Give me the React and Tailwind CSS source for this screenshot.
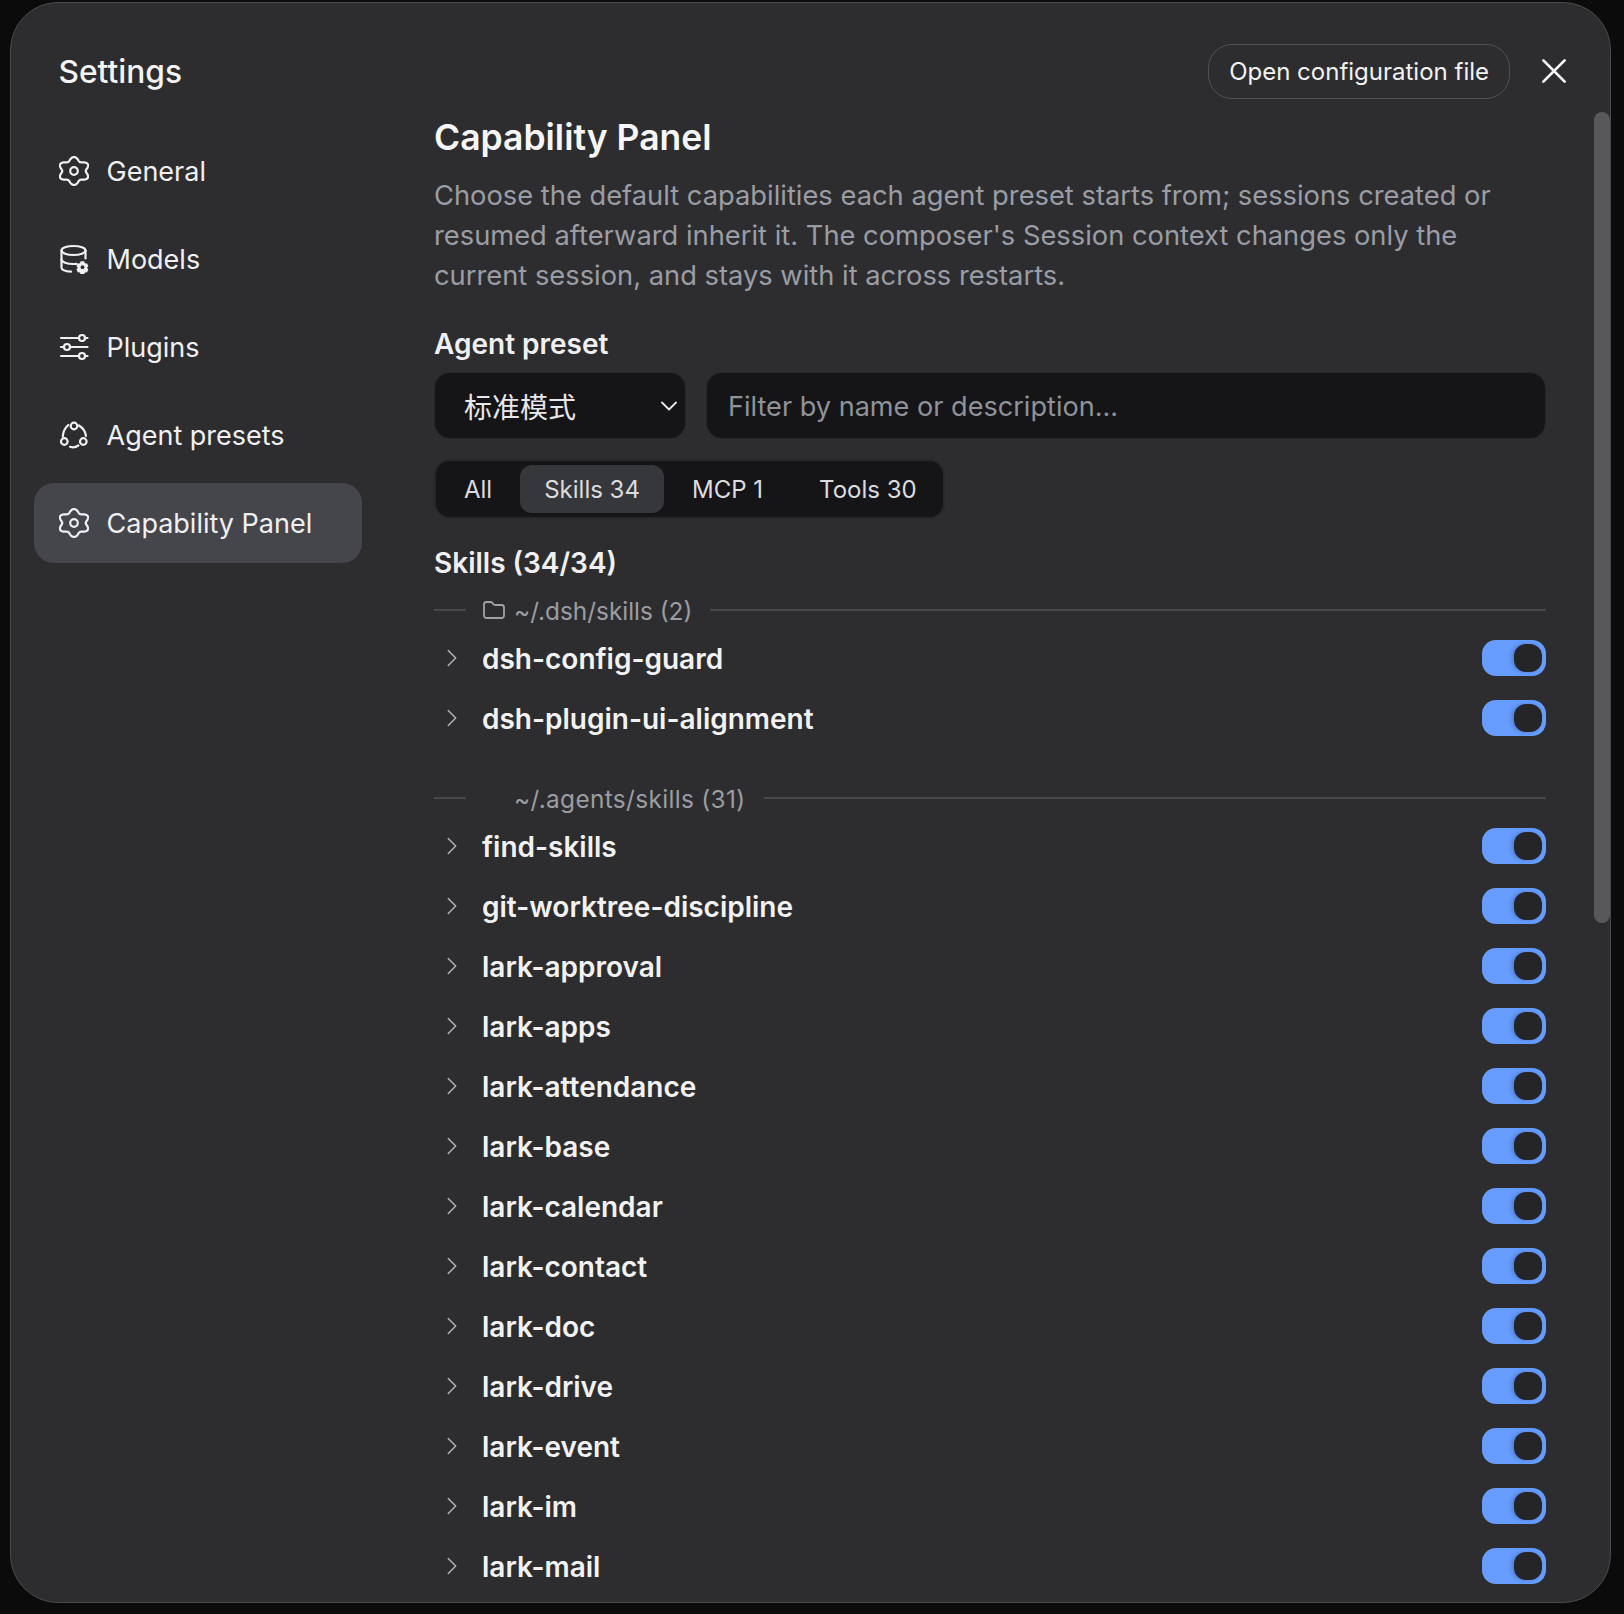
const flowerPath = (() => {
  const pts = [];
  for (let i = 0; i < 180; i++) {
    const t = (i / 180) * Math.PI * 2;
    const r = 12.2 + 1.8 * Math.cos(6 * t);
    pts.push(`${(15 + 1.13 * r * Math.sin(t)).toFixed(2)} ${(15 - r * Math.cos(t)).toFixed(2)}`);
  }
  return `M${pts.join("L")}Z`;
})();

const GearIcon = () => (
  <svg viewBox="0 0 30 30" className="w-[30px] h-[30px]" fill="none" stroke="currentColor" strokeWidth="2.200" strokeLinejoin="round">
    <path d={flowerPath} />
    <circle cx="15" cy="15" r="3.800" />
  </svg>
);

const ModelsIcon = () => (
  <svg viewBox="0 0 30 30" className="w-[30px] h-[30px]" fill="none" stroke="currentColor" strokeWidth="2.200" strokeLinecap="round" strokeLinejoin="round">
    <ellipse cx="14.500" cy="6.500" rx="12" ry="4.500" />
    <path d="M2.500 6.500v17c0 2.200 4 3.800 9.500 4.100" />
    <path d="M2.500 15.500c0 2.500 5.400 4.500 12 4.500 1 0 2-.1 3-.2" />
    <path d="M26.500 6.500v8" />
    <path d="M22 16.800h4l1 2.300 2.500.3 1.500 3-1.500 2.100 1.500 2.100-1.500 3-2.500.3-1 2.300h-4l-1-2.300-2.500-.3-1.500-3 1.500-2.100-1.500-2.100 1.500-3 2.500-.3z" fill="currentColor" stroke="none" transform="translate(3 3) scale(0.85)" />
    <circle cx="23.500" cy="23.200" r="1.900" fill="#2d2d2f" stroke="none" />
  </svg>
);

const SlidersIcon = () => (
  <svg viewBox="0 0 30 30" className="w-[30px] h-[30px]" fill="none" stroke="currentColor" strokeWidth="2.200" strokeLinecap="round">
    <path d="M2 6h18M26 6h2.500M2 15h3M11 15h17.500M2 24h18M26 24h2.500" />
    <circle cx="23" cy="6" r="3" />
    <circle cx="8" cy="15" r="3" />
    <circle cx="23" cy="24" r="3" />
  </svg>
);

const AgentIcon = () => (
  <svg viewBox="0 0 30 30" className="w-[30px] h-[30px]" fill="none" stroke="currentColor" strokeWidth="2.200" strokeLinecap="round">
    <circle cx="15" cy="6" r="3.300" />
    <circle cx="5.300" cy="21.500" r="3.300" />
    <circle cx="24.300" cy="21.500" r="3.300" />
    <path d="M3.800 16.500C4 12 6 8 9.300 5" />
    <path d="M20 5.500C24 8 26.500 11.800 27 16" />
    <path d="M11 26.800C14 27.800 17 27.200 19.300 25.500" />
  </svg>
);

const Chevron = () => (
  <svg viewBox="0 0 16 24" className="w-[12px] h-[18px] text-[#b3b3b6]" fill="none" stroke="currentColor" strokeWidth="2" strokeLinecap="round" strokeLinejoin="round">
    <path d="M3 2l10 10L3 22" />
  </svg>
);

const Toggle = () => (
  <div className="flex h-[36px] w-[64px] items-center justify-end rounded-[14px] bg-[#679dff] pr-[4px] shrink-0">
    <div className="h-[28px] w-[28px] rounded-[12px] bg-[#252527] shadow-[-2px_0_4px_rgba(30,60,120,0.35)]" />
  </div>
);

const Row = ({ name }) => (
  <div className="flex h-[60px] items-center justify-between">
    <div className="flex items-center">
      <div className="flex w-[48px] items-center pl-[12px]"><Chevron /></div>
      <span className="pt-[2px] text-[28px] font-semibold text-[#f2f2f3] leading-[40px]">{name}</span>
    </div>
    <Toggle />
  </div>
);

const GroupHeader = ({ label, folder }) => (
  <div className="flex h-[24px] items-center">
    <div className="h-[2px] w-[32px] bg-[#48484b]" />
    <div className="flex items-center pl-[16px] pr-[18px]">
      <div className="flex w-[32px] items-center">
        {folder && (
          <svg viewBox="0 0 24 24" className="w-[24px] h-[24px] text-[#a0a2a8]" fill="none" stroke="currentColor" strokeWidth="1.800" strokeLinejoin="round">
            <path d="M2 6.500C2 5 3 4 4.500 4h4.200c.7 0 1.300.3 1.700.9l1 1.300c.4.500 1 .8 1.700.8h6.400C21 7 22 8 22 9.500v8c0 1.500-1 2.500-2.500 2.500h-15C3 20 2 19 2 17.500z" />
          </svg>
        )}
      </div>
      <span className={`pt-[1px] text-[24.400px] leading-[32px] text-[#9b9da3] ${folder ? "" : "tracking-[0.35px]"}`}>{label}</span>
    </div>
    <div className="h-[2px] flex-1 bg-[#48484b]" />
  </div>
);

const NavItem = ({ icon, label, active }) => (
  <div className={`flex h-[80px] items-center gap-[18px] rounded-[20px] pl-[25px] ${active ? "bg-[#45464b]" : ""} text-[#f0f0f2] mb-[8px]`}>
    {icon}
    <span className="pt-[2px] text-[27px] leading-[40px]">{label}</span>
  </div>
);

const group1 = ["dsh-config-guard", "dsh-plugin-ui-alignment"];
const group2 = ["find-skills", "git-worktree-discipline", "lark-approval", "lark-apps", "lark-attendance", "lark-base", "lark-calendar", "lark-contact", "lark-doc", "lark-drive", "lark-event", "lark-im", "lark-mail"];

export default function App() {
  return (
    <div className="h-[1614px] w-[1624px] overflow-hidden bg-[#0b0b0b] pl-[9.500px] pt-[2px]" style={{ fontFamily: "Inter, 'Noto Sans CJK SC', sans-serif" }}>
      <div className="relative flex h-[1601px] w-[1601.500px] overflow-hidden rounded-[48px] border border-[#4a4a4c] bg-[#2d2d2f]">
        <aside className="w-[423.500px] shrink-0 pl-[23px] pr-[72.500px]">
          <div className="pl-[25px] pt-[47px] text-[31.700px] leading-[44px] font-medium text-[#f4f4f5]">Settings</div>
          <nav className="mt-[37px]">
            <NavItem icon={<GearIcon />} label="General" />
            <NavItem icon={<ModelsIcon />} label="Models" />
            <NavItem icon={<SlidersIcon />} label="Plugins" />
            <NavItem icon={<AgentIcon />} label="Agent presets" />
            <NavItem icon={<GearIcon />} label="Capability Panel" active />
          </nav>
        </aside>
        <main className="flex-1 pr-[64px] min-w-0">
          <div className="flex h-[98px] items-start justify-end pt-[41px] -mr-[23px]">
            <div className="flex h-[55px] items-center rounded-[24px] border border-[#515154] px-[20px] text-[24px] text-[#f2f2f3] whitespace-nowrap">Open configuration file</div>
            <svg viewBox="0 0 24 24" className="ml-[29px] mt-[12px] h-[30px] w-[30px] text-[#f4f4f5]" fill="none" stroke="currentColor" strokeWidth="2.200" strokeLinecap="round">
              <path d="M3.500 3.500l17 17M20.500 3.500l-17 17" />
            </svg>
          </div>
          <h1 className="mt-[11px] text-[35.500px] leading-[52px] font-semibold text-[#f6f6f7]">Capability Panel</h1>
          <p className="mt-[12px] text-[27.300px] leading-[40px] text-[#9a9da5]">Choose the default capabilities each agent preset starts from; sessions created or resumed afterward inherit it. The composer's Session context changes only the current session, and stays with it across restarts.</p>
          <h2 className="mt-[28px] text-[28px] leading-[40px] font-semibold text-[#f0f0f2]">Agent preset</h2>
          <div className="mt-[8px] flex gap-[20px]">
            <div className="flex h-[67px] w-[252px] items-center justify-between rounded-[16px] border border-[#27272a] bg-[#151517] pl-[29px] pr-[8px] text-[28px] text-[#e8e8ea]">
              <span className="pt-[4px]">标准模式</span>
              <svg viewBox="0 0 16 10" className="w-[16px] h-[10px] text-[#e8e8ea]" fill="none" stroke="currentColor" strokeWidth="1.800" strokeLinecap="round" strokeLinejoin="round"><path d="M1 1.500l7 7 7-7" /></svg>
            </div>
            <div className="flex h-[67px] flex-1 items-center rounded-[16px] border border-[#27272a] bg-[#151517] pl-[21px] pt-[4px] text-[27.100px] text-[#8f9299]">Filter by name or description...</div>
          </div>
          <div className="mt-[20px] flex h-[60px] w-[511px] items-center gap-[6px] rounded-[16px] border-2 border-[#27272a] bg-[#151517] px-[6px] text-[24px] text-[#dcdcdf] whitespace-nowrap">
            <div className="px-[22px] pt-[1px] leading-[48px]">All</div>
            <div className="rounded-[12px] bg-[#36373a] px-[24px] pt-[1px] leading-[47px]">Skills 34</div>
            <div className="pl-[22px] pr-[25px] pt-[1px] leading-[48px]">MCP 1</div>
            <div className="px-[25px] pt-[1px] leading-[48px]">Tools 30</div>
          </div>
          <h3 className="mt-[22px] text-[28px] leading-[44px] font-semibold text-[#f0f0f2]">Skills (34/34)</h3>
          <div className="mt-[13px]">
            <GroupHeader label="~/.dsh/skills (2)" folder />
            <div className="mt-[6px]">{group1.map((n) => <Row key={n} name={n} />)}</div>
          </div>
          <div className="mt-[38px]">
            <GroupHeader label="~/.agents/skills (31)" />
            <div className="mt-[6px]">{group2.map((n) => <Row key={n} name={n} />)}</div>
          </div>
        </main>
        <div className="absolute right-0 top-[109px] h-[811px] w-[16px] rounded-full bg-[#58585a]" />
      </div>
    </div>
  );
}
